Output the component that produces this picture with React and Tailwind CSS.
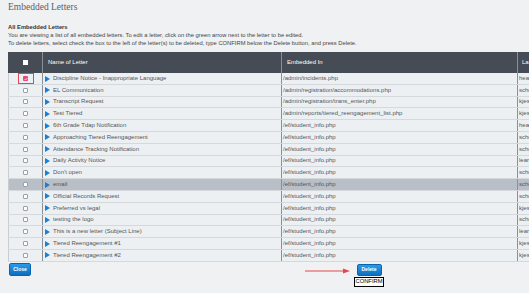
import React from "react";

const rows = [
  ["Discipline Notice - Inappropriate Language", "/admin/incidents.php", "headmaster"],
  ["EL Communication", "/admin/registration/accommodations.php", "school"],
  ["Transcript Request", "/admin/registration/trans_enter.php", "kjessup"],
  ["Test Tiered", "/admin/reports/tiered_reengagement_list.php", "kjessup"],
  ["6th Grade Tdap Notification", "/ef/student_info.php", "headmaster"],
  ["Approaching Tiered Reengagement", "/ef/student_info.php", "school"],
  ["Attendance Tracking Notification", "/ef/student_info.php", "school"],
  ["Daily Activity Notice", "/ef/student_info.php", "learning"],
  ["Don't open", "/ef/student_info.php", "school"],
  ["email", "/ef/student_info.php", "school"],
  ["Official Records Request", "/ef/student_info.php", "school"],
  ["Preferred vs legal", "/ef/student_info.php", "kjessup"],
  ["testing the logo", "/ef/student_info.php", "school"],
  ["This is a new letter (Subject Line)", "/ef/student_info.php", "learning"],
  ["Tiered Reengagement #1", "/ef/student_info.php", "kjessup"],
  ["Tiered Reengagement #2", "/ef/student_info.php", "kjessup"],
];

function Tri() {
  return (
    <svg width="5" height="6" viewBox="0 0 5 6" className="shrink-0">
      <path d="M0 0 L5 3 L0 6 Z" fill="#1a7fd6" />
    </svg>
  );
}

export default function App() {
  return (
    <div
      className="relative w-[529px] h-[293px] overflow-hidden bg-[#f0f1f3] text-[#444]"
      style={{ fontFamily: '"Liberation Sans", Arial, sans-serif' }}
    >
      <div className="pl-[8px] pt-[1px]">
        <div
          className="text-[9.5px] leading-[13px] text-[#5a5f66]"
          style={{ fontFamily: '"Liberation Serif", serif' }}
        >
          Embedded Letters
        </div>
        <div className="mt-[9px] text-[5.8px] leading-[8px] font-bold text-[#333]">All Embedded Letters</div>
        <div className="text-[5.8px] leading-[8px] text-[#444]">
          You are viewing a list of all embedded letters. To edit a letter, click on the green arrow next to the letter to be edited.
        </div>
        <div className="text-[5.8px] leading-[8px] text-[#444]">
          To delete letters, select check the box to the left of the letter(s) to be deleted, type CONFIRM below the Delete button, and press Delete.
        </div>
      </div>

      <div className="ml-[8px] mt-[5px] w-[560px]">
        <div className="grid grid-cols-[35px_239px_236px_50px] h-[21px] bg-[#454c55] text-white text-[6px]">
          <div className="flex items-center justify-center border-r border-[#8a9097]">
            <div className="w-[5px] h-[5px] bg-white" />
          </div>
          <div className="flex items-center pl-[5px] border-r border-[#8a9097]">Name of Letter</div>
          <div className="flex items-center pl-[5px] border-r border-[#8a9097]">Embedded In</div>
          <div className="flex items-center pl-[4px]">Last</div>
        </div>
        {rows.map((r, i) => {
          const sel = r[0] === "email";
          const bg = sel ? "bg-[#b9bfc6]" : "bg-[#edf0f3]";
          return (
            <div
              key={i}
              className={`grid grid-cols-[35px_239px_236px_50px] h-[11.8px] text-[6px] text-[#555] border-b border-[#d5d9de] ${bg}`}
            >
              <div className="flex items-center justify-center border-r border-[#8a9097] border-l border-l-[#c9cdd2]">
                {i === 0 ? (
                  <div className="flex items-center justify-center w-[16px] h-[11px] border border-[#e8474a]">
                    <div className="w-[5px] h-[5px] bg-[#e9467f] rounded-[1px] flex items-center justify-center">
                      <svg width="4" height="4" viewBox="0 0 4 4">
                        <path d="M0.6 2 L1.6 3 L3.4 1" stroke="white" strokeWidth="0.7" fill="none" />
                      </svg>
                    </div>
                  </div>
                ) : (
                  <div className="w-[5px] h-[5px] bg-white border border-[#9aa0a6] rounded-[1px]" />
                )}
              </div>
              <div className="flex items-center gap-[3px] pl-[2px] border-r border-[#8a9097] whitespace-nowrap">
                <Tri />
                <span>{r[0]}</span>
              </div>
              <div className="flex items-center pl-[1px] border-r border-[#8a9097] whitespace-nowrap">{r[1]}</div>
              <div className="flex items-center pl-[1px] whitespace-nowrap overflow-hidden">{r[2]}</div>
            </div>
          );
        })}
      </div>

      <div className="flex items-start pl-[9px] pt-[1px]">
        <button className="w-[22px] h-[13px] rounded-[2px] bg-gradient-to-b from-[#2b9ae6] to-[#0d6fc0] text-white text-[5px] font-bold border border-[#0b63ad]">
          Close
        </button>
        <div className="ml-[323px] flex flex-col items-center">
          <button className="mt-[1px] w-[25px] h-[12px] rounded-[2px] bg-gradient-to-b from-[#2b9ae6] to-[#0d6fc0] text-white text-[5px] font-bold border border-[#0b63ad]">
            Delete
          </button>
          <div className="mt-[1px] w-[30px] h-[10px] bg-white border border-black text-[5.8px] text-black flex items-center justify-center">
            CONFIRM
          </div>
        </div>
      </div>

      <svg className="absolute left-[305px] top-[268px]" width="46" height="6" viewBox="0 0 46 6">
        <line x1="0" y1="3" x2="40" y2="3" stroke="#e8474a" strokeWidth="1" />
        <path d="M38 0.5 L45 3 L38 5.5 Z" fill="#e8474a" />
      </svg>
    </div>
  );
}
